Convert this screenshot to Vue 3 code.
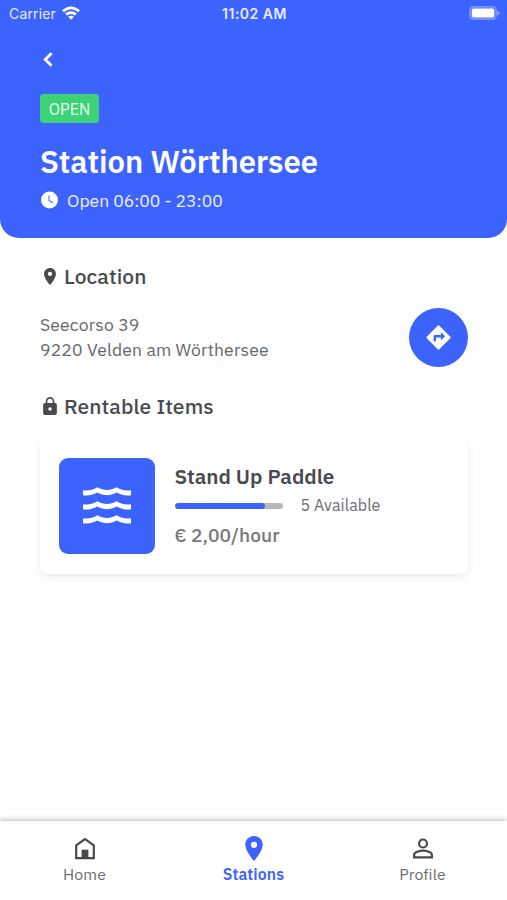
<script setup>
import { ref } from 'vue'

const station = {
  name: 'Station Wörthersee',
  hours: 'Open 06:00 - 23:00',
  street: 'Seecorso 39',
  city: '9220 Velden am Wörthersee'
}

const items = [
  { id: 1, name: 'Stand Up Paddle', available: 5, total: 6, price: '€ 2,00/hour' }
]

const tabs = [
  { id: 'home', label: 'Home' },
  { id: 'stations', label: 'Stations' },
  { id: 'profile', label: 'Profile' }
]
const activeTab = ref('stations')
</script>

<template>
  <div class="screen">
    <header class="header">
      <div class="status-bar">
        <div class="carrier">
          <span>Carrier</span>
          <svg class="wifi" viewBox="0 0 18 14">
            <path d="M0 4.2Q9-3.4 18 4.2L16.1 6.3Q9 .2 1.9 6.3Z" />
            <path d="M3.1 7.6Q9 2.7 14.9 7.6L13 9.6Q9 6.4 5 9.6Z" />
            <path d="M6.1 10.8Q9 8.6 11.9 10.8L9 13.8Z" />
          </svg>
        </div>
        <span class="time">11:02 AM</span>
        <svg class="battery" viewBox="0 0 31 14">
          <rect x="0.8" y="0.8" width="26.4" height="12.4" rx="3.6" fill="#fff" fill-opacity=".12" stroke="#fff" stroke-opacity=".3" stroke-width="1.4" />
          <rect x="2.8" y="2.6" width="22.4" height="8.8" rx="1.6" fill="#fff" />
          <path d="M28.4 4.8Q30.6 5.6 30.6 7T28.4 9.2Z" fill="#fff" fill-opacity=".5" />
        </svg>
      </div>
      <button class="back" aria-label="Back">
        <svg viewBox="0 0 10 15"><path d="M8.6 1.2 2.2 7.5 8.6 13.8" fill="none" stroke="#fff" stroke-width="2.8" /></svg>
      </button>
      <div class="badge"><span>OPEN</span></div>
      <h1><span>{{ station.name }}</span></h1>
      <div class="hours">
        <svg viewBox="0 0 18 18">
          <circle cx="9.500" cy="9" r="8.500" fill="#fff" />
          <path d="M9 4.5V9.300L12.800 12" fill="none" stroke="#3d63ff" stroke-opacity=".8" stroke-width="1.300" />
        </svg>
        <span>{{ station.hours }}</span>
      </div>
    </header>

    <main>
      <h2>
        <svg viewBox="5 2 14 20"><path d="M12 2C8.1 2 5 5.1 5 9c0 5.2 7 13 7 13s7-7.800 7-13c0-3.900-3.100-7-7-7zm0 9.500a2.500 2.500 0 1 1 0-5 2.500 2.500 0 0 1 0 5z" /></svg>
        <span>Location</span>
      </h2>
      <div class="address">
        <div class="lines">
          <div>{{ station.street }}</div>
          <div>{{ station.city }}</div>
        </div>
        <button class="directions" aria-label="Directions">
          <svg viewBox="0 0 24 24"><path d="m21.710 11.290-9-9a1 1 0 0 0-1.410 0l-9 9a1 1 0 0 0 0 1.410l9 9a1 1 0 0 0 1.410 0l9-9a1 1 0 0 0 0-1.410zM14 14.500V12h-4v3H8v-4c0-.55.45-1 1-1h5V7.500l3.500 3.500-3.500 3.500z" /></svg>
        </button>
      </div>

      <h2 class="rentable">
        <svg viewBox="4 1 16 21"><path d="M18 8h-1V6A5 5 0 0 0 7 6v2H6a2 2 0 0 0-2 2v10a2 2 0 0 0 2 2h12a2 2 0 0 0 2-2V10a2 2 0 0 0-2-2zM8.900 6a3.100 3.100 0 0 1 6.200 0v2H8.900zM12 17a2 2 0 1 1 0-4 2 2 0 0 1 0 4z" /></svg>
        <span>Rentable Items</span>
      </h2>
      <div v-for="item in items" :key="item.id" class="card">
        <div class="thumb">
          <svg viewBox="0 0 48 38">
            <path v-for="y in [0, 14, 28]" :key="y" :transform="`translate(0 ${y})`" d="M0 3.300C6 4.200 9 3 14.500.3 21 4 27 4 33.500.3 39 3 42 4.200 48 3.300V8.300C42 9.200 39 7.800 33.500 5.500 27 9 21 9 14.500 5.500 9 7.800 6 9.200 0 8.300Z" />
          </svg>
        </div>
        <div class="info">
          <div class="name">{{ item.name }}</div>
          <div class="stock">
            <div class="bar"><div class="fill" :style="{ width: (item.available / item.total) * 100 + '%' }"></div></div>
            <span>{{ item.available }} Available</span>
          </div>
          <div class="price">{{ item.price }}</div>
        </div>
      </div>
    </main>

    <nav>
      <button v-for="tab in tabs" :key="tab.id" :class="{ active: tab.id === activeTab }" @click="activeTab = tab.id">
        <svg v-if="tab.id === 'home'" viewBox="0 0 20 22">
          <path class="outline" d="M1.200 20.600V7.800L10 1.500 18.800 7.800V20.600Z" />
          <path d="M6.600 12.200h6.800v8.500H6.600z" />
        </svg>
        <svg v-else-if="tab.id === 'stations'" viewBox="5 2 14 20"><path d="M12 2C8.100 2 5 5.100 5 9c0 5.200 7 13 7 13s7-7.800 7-13c0-3.900-3.100-7-7-7zm0 9.500a2.500 2.500 0 1 1 0-5 2.500 2.500 0 0 1 0 5z" /></svg>
        <svg v-else viewBox="0 0 20 20">
          <circle class="outline" cx="10" cy="5" r="4" />
          <path class="outline" d="M1.100 18.900V16.300C1.100 13.700 6.500 12.200 10 12.200S18.900 13.700 18.900 16.300V18.900Z" />
        </svg>
        <span>{{ tab.label }}</span>
      </button>
    </nav>
  </div>
</template>

<style>
body { margin: 0; background: #fefefe; }
</style>

<style scoped>
.screen { width: 507px; height: 900px; display: flex; flex-direction: column; overflow: hidden; background: #fefefe; color: #484b4e; font-family: "IBM Plex Sans", Roboto, "Noto Sans", sans-serif; }
button { padding: 0; border: none; background: none; font: inherit; color: inherit; cursor: pointer; }
svg { display: block; flex: none; fill: currentColor; }
h1, h2 { margin: 0; }
span, .lines div, .name, .price { white-space: nowrap; }

.header { box-sizing: border-box; height: 238px; flex: none; padding-left: 40px; background: #3d63ff; color: #fff; border-radius: 0 0 19px 19px; }
.status-bar { height: 26px; margin-left: -40px; padding: 0 7px 0 9px; display: grid; grid-template-columns: 1fr auto 1fr; align-items: center; font-family: Inter, sans-serif; font-size: 14px; color: #e6ebff; }
.carrier { display: flex; align-items: center; gap: 6px; letter-spacing: 0.15px; }
.wifi { width: 18px; height: 14px; color: #fff; }
.time { font-weight: 600; letter-spacing: 0.5px; }
.battery { width: 31px; height: 14px; justify-self: end; }
.back { display: block; margin: 26px 0 0 3px; }
.back svg { width: 10px; height: 15px; }
.badge { width: 59px; height: 29px; margin-top: 27px; border-radius: 4px; background: #3dd276; color: #e9fff2; text-align: center; font-size: 16px; line-height: 30px; }
h1 { height: 40px; margin-top: 19px; line-height: 40px; font-size: 31px; font-weight: 600; letter-spacing: -0.03px; }
.hours { height: 24px; margin-top: 6px; display: flex; align-items: center; gap: 9px; font-size: 17.5px; color: #edf1ff; }
.hours svg { width: 18px; height: 18px; }

main { flex: 1; padding: 24px 39px 0 40px; }
h2 { height: 28px; display: flex; align-items: center; font-size: 21px; font-weight: 500; letter-spacing: 0.1px; }
h2 svg { width: 12px; height: 17px; margin: 0 8px 0 4px; }
.address { height: 60px; margin-top: 17px; display: flex; justify-content: space-between; align-items: center; }
.lines { padding-top: 1px; font-size: 17.5px; line-height: 24.500px; letter-spacing: 0.16px; color: #65686b; }
.directions { width: 59px; height: 59px; border-radius: 50%; background: #3d63ff; color: #fff; display: flex; align-items: center; justify-content: center; }
.directions svg { width: 29px; height: 29px; }
.rentable { margin-top: 25px; }
.rentable svg { width: 14px; height: 18px; margin: 0 7px 0 3px; }
.card { box-sizing: border-box; height: 135px; margin-top: 19px; padding: 19px 19px 20px; border-radius: 8px; background: #fff; box-shadow: 0 3px 7px rgba(0, 0, 0, 0.075); display: flex; align-items: flex-start; gap: 19.500px; }
.thumb { width: 96px; height: 96px; border-radius: 9px; background: #3d63ff; color: #fff; display: flex; align-items: center; justify-content: center; }
.thumb svg { width: 48px; height: 38px; }
.info { padding-top: 4px; }
.name { height: 29px; line-height: 30px; font-size: 20.700px; font-weight: 600; }
.stock { height: 29px; display: flex; align-items: center; gap: 17.500px; font-size: 16px; letter-spacing: 0.1px; color: #6a6d70; }
.stock span { line-height: 20px; padding-bottom: 2px; }
.bar { width: 108.500px; height: 6px; border-radius: 3px; overflow: hidden; background: #b8b8ba; }
.fill { height: 100%; border-radius: 3px; background: #3d63ff; }
.price { height: 30px; line-height: 30px; font-size: 19.200px; font-weight: 500; color: #77797b; }

nav { height: 79px; flex: none; display: grid; grid-template-columns: repeat(3, 1fr); background: #fff; box-shadow: 0 -1px 5px rgba(0, 0, 0, 0.28); }
nav button { display: flex; flex-direction: column; align-items: center; padding-top: 15px; }
nav button svg { width: 20px; height: 25px; color: #484b4e; }
nav span { margin-top: 1px; font-size: 15.800px; line-height: 24px; letter-spacing: 0.1px; color: #6a6d70; }
nav .active svg, nav .active span { color: #3d63ff; }
nav .active span { font-weight: 600; }
.outline { fill: none; stroke: currentColor; stroke-width: 2.200; }
</style>
